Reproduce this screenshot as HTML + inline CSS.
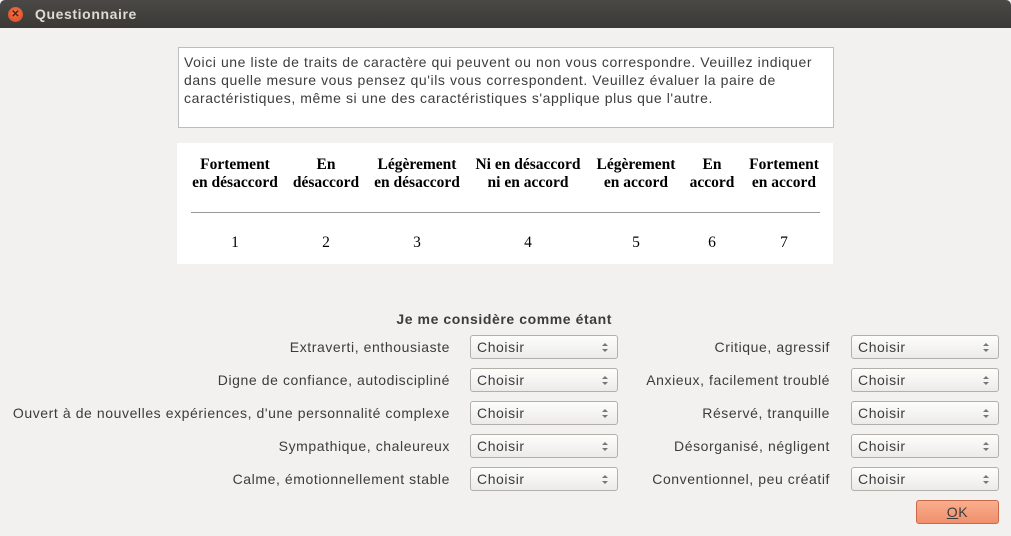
<!DOCTYPE html>
<html><head><meta charset="utf-8"><style>
*{margin:0;padding:0;box-sizing:border-box}
body{width:1011px;height:536px;background:#f2f1f0;position:relative;overflow:hidden;font-family:"Liberation Sans",sans-serif;color:#3c3c3c;font-size:14px;letter-spacing:0.58px}
.title{position:absolute;left:0;top:0;width:1011px;height:28px;background:linear-gradient(#4a4945,#3a3935);border-radius:5px 5px 0 0}
.title .x{position:absolute;left:8px;top:7px;width:15px;height:15px;border-radius:50%;background:radial-gradient(circle at 50% 40%,#f27550,#d8461c);color:#5a1a08;font-size:10px;line-height:15px;text-align:center;font-weight:bold;letter-spacing:0}
.title .t{position:absolute;left:35px;top:6px;color:#dfdbd2;font-weight:bold;font-size:14px;letter-spacing:0.6px}
.box{position:absolute;left:178px;top:47px;width:656px;height:81px;background:#fff;border:1px solid #bdbdbd;padding:5px 0 0 5px;line-height:18px;white-space:nowrap}
.tbl{position:absolute;left:177px;top:143px;width:656px;height:121px;background:#fff;font-family:"Liberation Serif",serif;color:#000;letter-spacing:0}
.h{position:absolute;top:13px;transform:translateX(-50%);text-align:center;font-weight:bold;font-size:15.5px;line-height:18px;white-space:nowrap}
.n{position:absolute;top:91px;transform:translateX(-50%);font-size:15.5px}
.line{position:absolute;left:14px;top:69px;width:629px;height:1px;background:#999}
.lbl{position:absolute;text-align:right;white-space:nowrap;line-height:24px}
.cb{position:absolute;width:148px;height:24px;border:1px solid #b3b0aa;border-radius:3px;background:linear-gradient(#fdfdfc,#ecebe9);padding-left:6px;line-height:22px}
.cb:after{content:"";position:absolute;right:9px;top:7px;border:3px solid transparent;border-bottom:3px solid #777;border-top:none}
.cb:before{content:"";position:absolute;right:9px;top:13px;border:3px solid transparent;border-top:3px solid #777;border-bottom:none}
.ok{position:absolute;left:916px;top:500px;width:83px;height:24px;border:1px solid #c8694a;border-radius:3px;background:linear-gradient(#f9ae8e,#f08f6c);text-align:center;line-height:22px}
</style></head><body>
<div class="title"><div class="x">✕</div><div class="t">Questionnaire</div></div>
<div class="box">Voici une liste de traits de caractère qui peuvent ou non vous correspondre. Veuillez indiquer<br>dans quelle mesure vous pensez qu'ils vous correspondent. Veuillez évaluer la paire de<br>caractéristiques, même si une des caractéristiques s'applique plus que l'autre.</div>
<div class="tbl">
<div class="h" style="left:58px">Fortement<br>en désaccord</div>
<div class="h" style="left:149px">En<br>désaccord</div>
<div class="h" style="left:240px">Légèrement<br>en désaccord</div>
<div class="h" style="left:351px">Ni en désaccord<br>ni en accord</div>
<div class="h" style="left:459px">Légèrement<br>en accord</div>
<div class="h" style="left:535px">En<br>accord</div>
<div class="h" style="left:607px">Fortement<br>en accord</div>
<div class="line"></div>
<div class="n" style="left:58px">1</div><div class="n" style="left:149px">2</div><div class="n" style="left:240px">3</div><div class="n" style="left:351px">4</div><div class="n" style="left:459px">5</div><div class="n" style="left:535px">6</div><div class="n" style="left:607px">7</div>
</div>
<div class="lbl" style="right:399px;top:307px;font-weight:bold">Je me considère comme étant</div>

<div class="lbl" style="right:561px;top:335px">Extraverti, enthousiaste</div><div class="cb" style="left:470px;top:335px">Choisir</div>
<div class="lbl" style="right:561px;top:368px">Digne de confiance, autodiscipliné</div>
<div class="cb" style="left:470px;top:368px">Choisir</div>
<div class="lbl" style="right:561px;top:401px">Ouvert à de nouvelles expériences, d'une personnalité complexe</div><div class="cb" style="left:470px;top:401px">Choisir</div>
<div class="lbl" style="right:561px;top:434px">Sympathique, chaleureux</div><div class="cb" style="left:470px;top:434px">Choisir</div>
<div class="lbl" style="right:561px;top:467px">Calme, émotionnellement stable</div><div class="cb" style="left:470px;top:467px">Choisir</div>

<div class="lbl" style="right:181px;top:335px">Critique, agressif</div><div class="cb" style="left:851px;top:335px">Choisir</div>
<div class="lbl" style="right:181px;top:368px">Anxieux, facilement troublé</div><div class="cb" style="left:851px;top:368px">Choisir</div>
<div class="lbl" style="right:181px;top:401px">Réservé, tranquille</div><div class="cb" style="left:851px;top:401px">Choisir</div>
<div class="lbl" style="right:181px;top:434px">Désorganisé, négligent</div><div class="cb" style="left:851px;top:434px">Choisir</div>
<div class="lbl" style="right:181px;top:467px">Conventionnel, peu créatif</div><div class="cb" style="left:851px;top:467px">Choisir</div>
<div class="ok"><u>O</u>K</div>
</body></html>
